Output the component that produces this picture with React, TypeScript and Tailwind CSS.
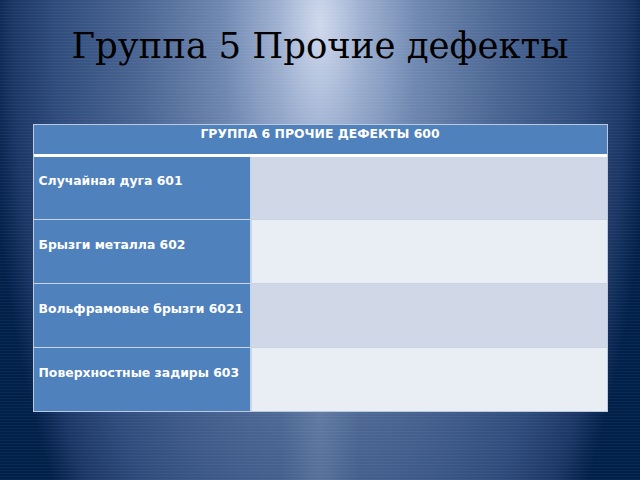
const rows = [
  { name: 'Случайная дуга 601', bg: 'bg-[#d0d8e8]', h: 'h-[62px] pt-[17px]' },
  { name: 'Брызги металла 602', bg: 'bg-[#e9edf4]', h: 'h-[64px] border-t pt-[18px]' },
  { name: 'Вольфрамовые брызги 6021', bg: 'bg-[#d0d8e8]', h: 'h-[64px] border-t pt-[18px]' },
  { name: 'Поверхностные задиры 603', bg: 'bg-[#e9edf4]', h: 'h-[64px] border-t pt-[18px]' },
];

const App = () => {
  return (
    <div className="relative w-[640px] h-[480px] overflow-hidden bg-[#01204a] bg-[radial-gradient(ellipse_52%_160%_at_50%_5%,#cdd6ea_0%,#a0b2d2_12%,#6e87b0_30%,#4a6592_55%,#2e4b7b_80%,#1c3766_92%,#01204a_100%)]">
      <div className="absolute inset-0 bg-[linear-gradient(90deg,transparent_44%,rgba(220,230,250,0.12)_50%,transparent_56%)]" />
      <div className="absolute inset-0 bg-[repeating-linear-gradient(0deg,rgba(255,255,255,0.04)_0px,rgba(255,255,255,0.04)_1px,transparent_1px,transparent_3px)]" />
      <div className="relative flex flex-col items-center">
        <h1 className="mt-[28px] h-[35px] text-[35.5px] leading-[35px] text-black font-['DejaVu_Serif',serif]">
          Группа 5 Прочие дефекты
        </h1>
        <div className="mt-[61px] w-[575px] border border-[#bccadf] font-['DejaVu_Sans',sans-serif] font-bold text-[12.4px] leading-[14px] text-white">
          <div className="h-[32px] bg-[#4f81bd] text-center pt-[2px] border-b-[3px] border-white">
            ГРУППА 6 ПРОЧИЕ ДЕФЕКТЫ 600
          </div>
          {rows.map((r, i) => (
            <div key={i} className={`flex border-[#c9d4e6] ${r.h.split(' ').filter(c => !c.startsWith('pt-')).join(' ')}`}>
              <div className={`w-[218px] bg-[#4f81bd] pl-[5px] border-r-2 border-[#c9d4e6] ${i === 0 ? 'pt-[17px]' : 'pt-[18px]'}`}>
                {r.name}
              </div>
              <div className={`flex-1 ${r.bg}`} />
            </div>
          ))}
        </div>
      </div>
    </div>
  );
};

export default App;
